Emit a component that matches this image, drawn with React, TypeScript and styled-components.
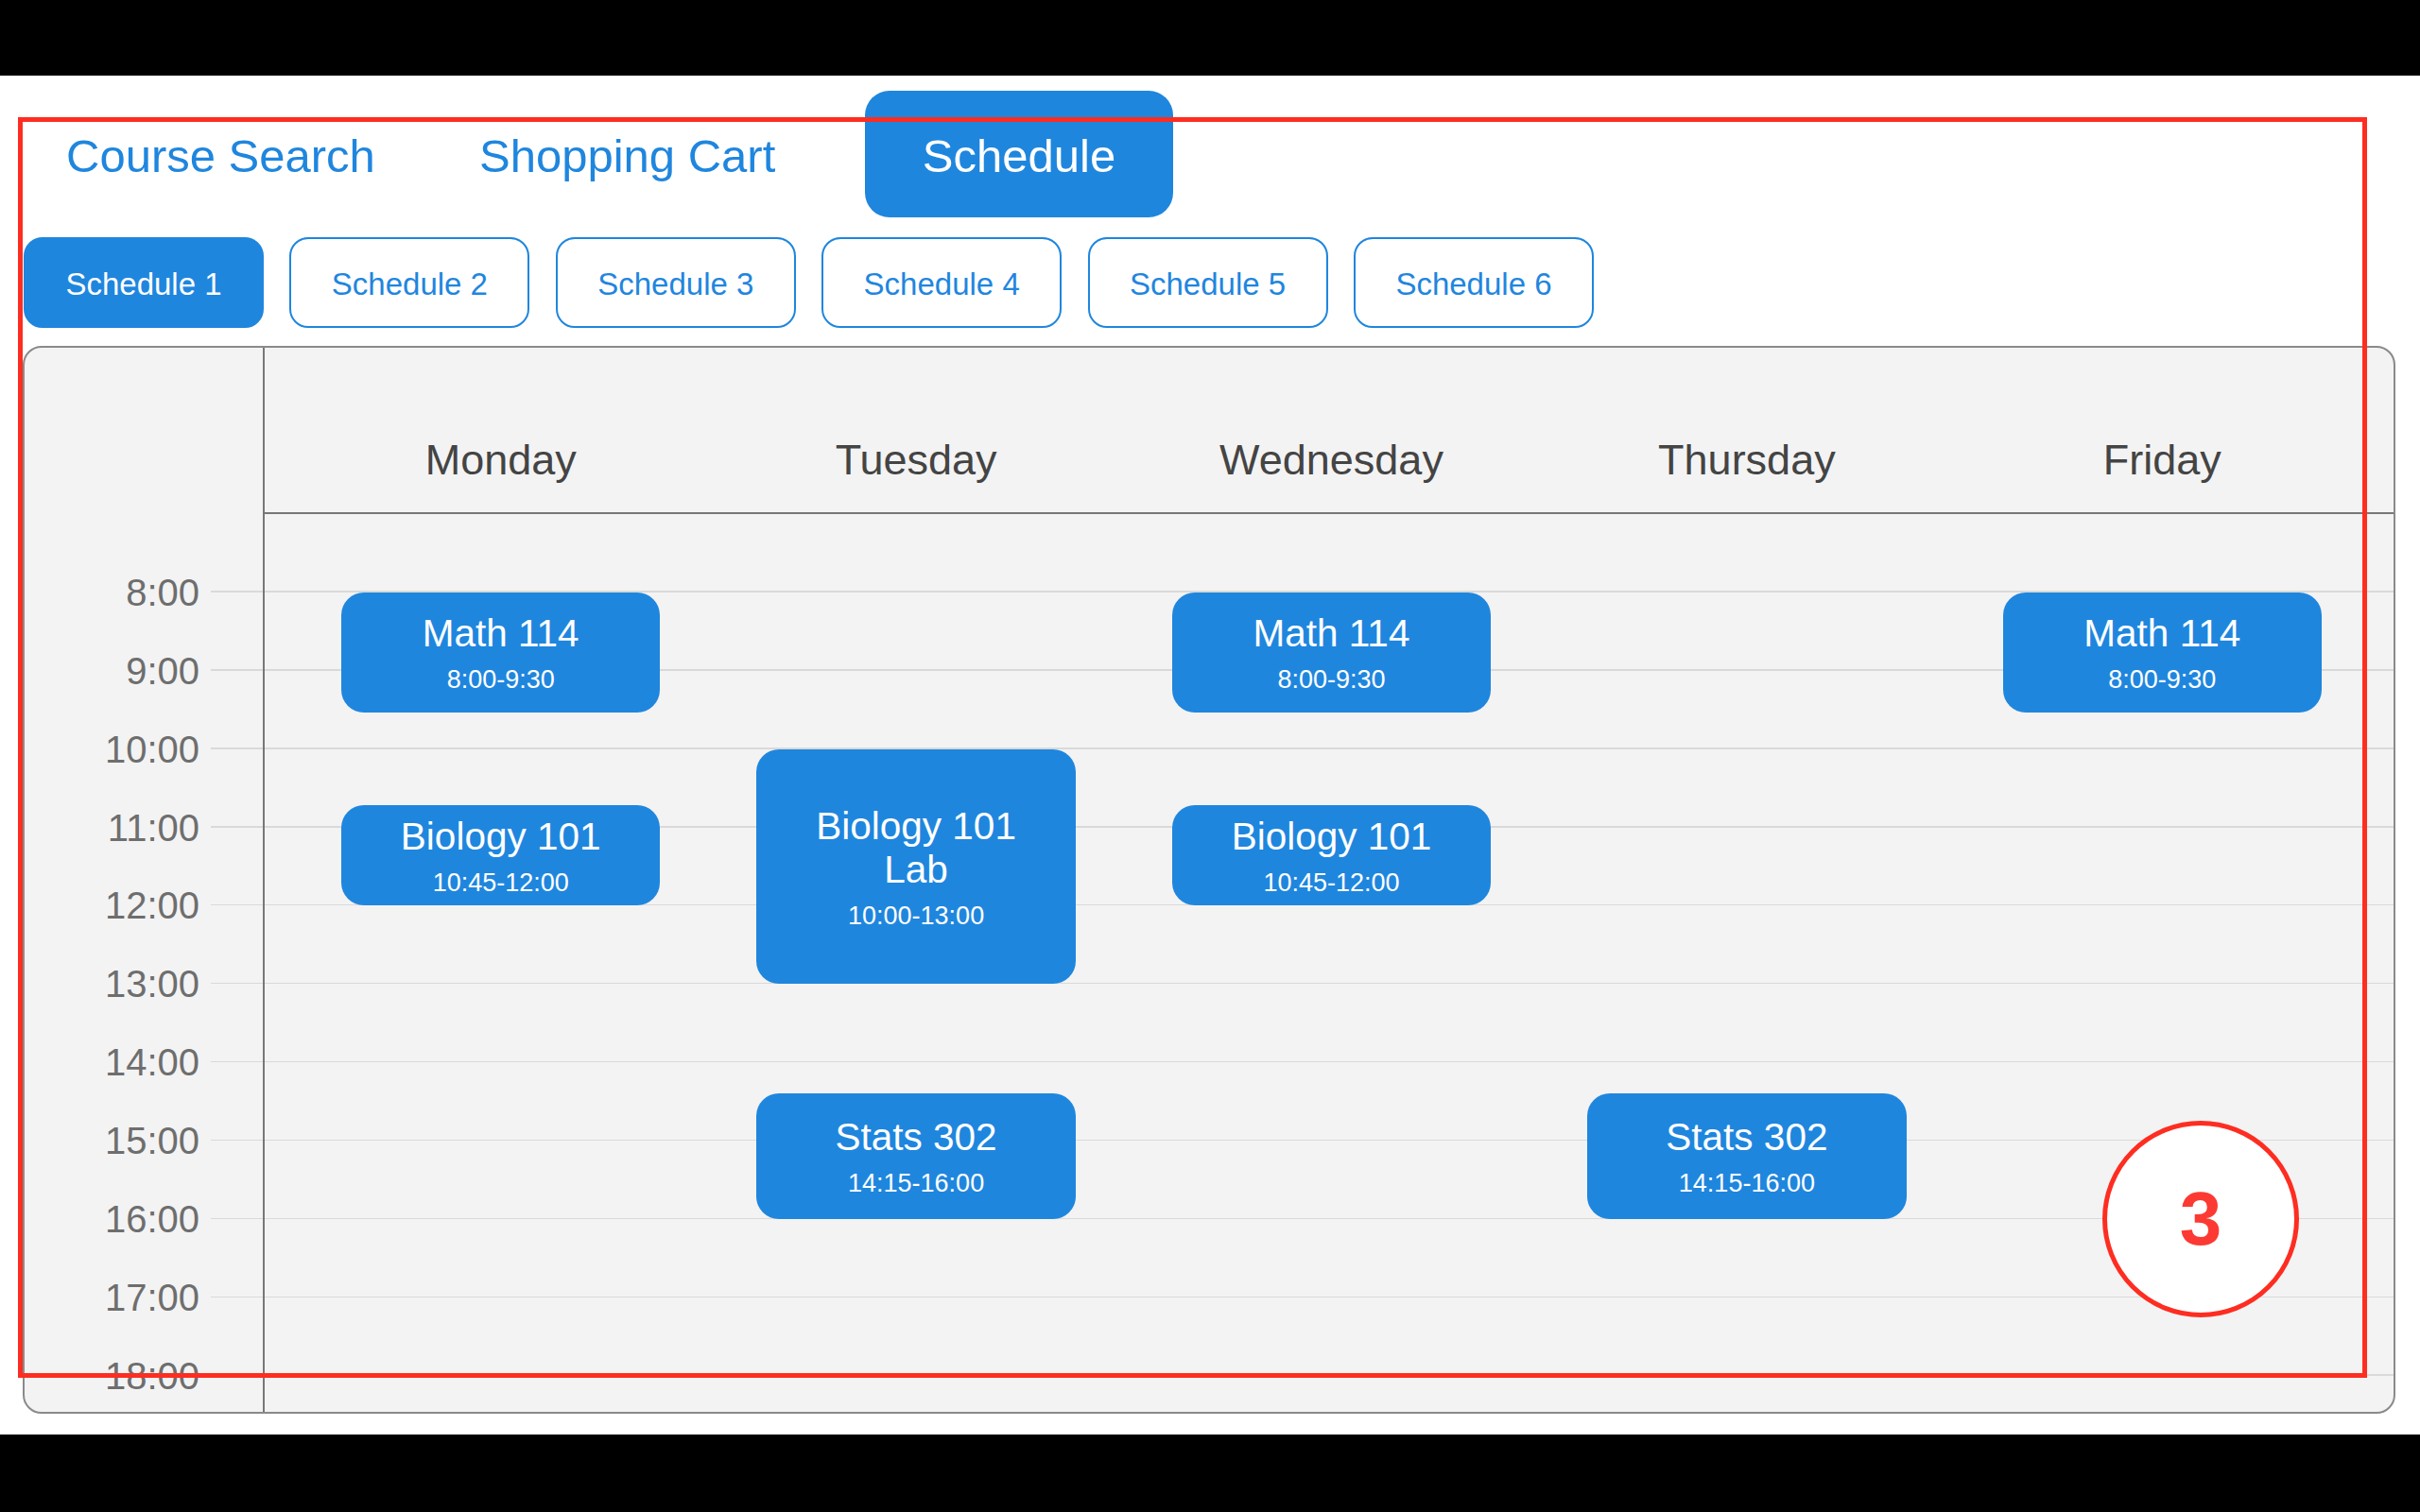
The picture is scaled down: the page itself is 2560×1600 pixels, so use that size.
import React from "react";
import styled, { createGlobalStyle } from "styled-components";

const HOUR = 82.9;
const FIRST_HOUR = 7;
const BLUE = "#1f86de";
const RED = "#fe2d21";

const GlobalStyle = createGlobalStyle`
  html, body {
    margin: 0;
    padding: 0;
    background: #000;
  }
  body {
    font-family: "Liberation Sans", Arial, Helvetica, sans-serif;
    -webkit-font-smoothing: antialiased;
  }
  * { box-sizing: border-box; }
`;

const Frame = styled.div`
  position: relative;
  width: 2560px;
  height: 1600px;
  background: #000;
  padding-top: 80px;
`;

const Screen = styled.main`
  height: 1438px;
  background: #fff;
  padding: 16px 26px 0 24px;
  display: flex;
  flex-direction: column;
`;

const Nav = styled.nav`
  display: grid;
  grid-template-columns: 437px 408px 326px;
  height: 134px;
  padding-left: 46px;
`;

const NavTab = styled.div<{ $active?: boolean }>`
  display: flex;
  align-items: center;
  justify-content: ${(p) => (p.$active ? "center" : "flex-start")};
  padding-top: 4px;
  border-radius: 26px;
  font-size: 49px;
  line-height: 1;
  white-space: nowrap;
  color: ${(p) => (p.$active ? "#fff" : BLUE)};
  background: ${(p) => (p.$active ? BLUE : "transparent")};
`;

const ScheduleTabs = styled.div`
  display: flex;
  gap: 27.4px;
  margin-top: 21px;
  padding-left: 1px;
`;

const ScheduleButton = styled.div<{ $active?: boolean }>`
  width: 254px;
  height: 96px;
  display: flex;
  align-items: center;
  justify-content: center;
  padding-top: 4px;
  border: 2px solid ${BLUE};
  border-radius: 20px;
  font-size: 33px;
  color: ${(p) => (p.$active ? "#fff" : BLUE)};
  background: ${(p) => (p.$active ? BLUE : "#fff")};
`;

const Panel = styled.section`
  margin-top: 19px;
  height: 1130px;
  border: 2px solid #8a8a8a;
  border-radius: 20px;
  background: #f3f3f3;
  display: flex;
  overflow: hidden;
`;

const TimeColumn = styled.div`
  width: 254px;
  border-right: 2px solid #777;
  display: flex;
  flex-direction: column;
`;

const TimeHeader = styled.div`
  height: 176px;
  flex: none;
`;

const TimeBody = styled.div`
  flex: 1;
  padding-top: ${HOUR / 2}px;
  padding-right: 67px;
  background: repeating-linear-gradient(
      to bottom,
      transparent 0,
      transparent ${HOUR - 1.5}px,
      #d9d9d9 ${HOUR - 1.5}px,
      #d9d9d9 ${HOUR}px
    )
    right top / 55px 100% no-repeat;
`;

const TimeSlot = styled.div`
  height: ${HOUR}px;
  display: flex;
  align-items: center;
  justify-content: flex-end;
  font-size: 40px;
  line-height: 40px;
  color: #6e6e6e;
`;

const DaysArea = styled.div`
  flex: 1;
  display: flex;
  flex-direction: column;
`;

const DayHeader = styled.div`
  height: 176px;
  flex: none;
  border-bottom: 2px solid #777;
  display: grid;
  grid-template-columns: repeat(5, 1fr);
  align-items: end;
  padding: 0 25px 29px 30px;
`;

const DayName = styled.div`
  text-align: center;
  font-size: 45px;
  line-height: 52px;
  color: #444;
`;

const DayBody = styled.div`
  flex: 1;
  display: grid;
  grid-template-columns: repeat(5, 1fr);
  padding: 0 25px 0 30px;
  background: repeating-linear-gradient(
    to bottom,
    transparent 0,
    transparent ${HOUR - 1.5}px,
    #d9d9d9 ${HOUR - 1.5}px,
    #d9d9d9 ${HOUR}px
  );
`;

const DayColumn = styled.div`
  position: relative;
`;

const EventBlock = styled.div`
  position: absolute;
  left: 51px;
  right: 51px;
  border-radius: 24px;
  background: ${BLUE};
  color: #fff;
  display: flex;
  flex-direction: column;
  align-items: center;
  justify-content: center;
  text-align: center;
  padding: 0 34px;
`;

const EventTitle = styled.div`
  font-size: 40.5px;
  line-height: 46px;
`;

const EventTime = styled.div`
  margin-top: 11px;
  font-size: 27px;
  line-height: 30px;
`;

const Annotation = styled.div`
  position: absolute;
  left: 19px;
  top: 124px;
  width: 2485px;
  height: 1334px;
  border: 5px solid ${RED};
  pointer-events: none;
`;

const Marker = styled.div`
  position: absolute;
  left: 2224px;
  top: 1186px;
  width: 208px;
  height: 208px;
  border: 5px solid ${RED};
  border-radius: 50%;
  background: #fff;
  display: flex;
  align-items: center;
  justify-content: center;
  font-size: 80px;
  font-weight: 700;
  color: #fc3a33;
  line-height: 1;
`;

type Course = { title: string; time: string; start: number; end: number };

const math: Course = { title: "Math 114", time: "8:00-9:30", start: 8, end: 9.53 };
const bio: Course = { title: "Biology 101", time: "10:45-12:00", start: 10.72, end: 12 };
const lab: Course = { title: "Biology 101 Lab", time: "10:00-13:00", start: 10, end: 13 };
const stats: Course = { title: "Stats 302", time: "14:15-16:00", start: 14.39, end: 16 };

const days: { name: string; courses: Course[] }[] = [
  { name: "Monday", courses: [math, bio] },
  { name: "Tuesday", courses: [lab, stats] },
  { name: "Wednesday", courses: [math, bio] },
  { name: "Thursday", courses: [stats] },
  { name: "Friday", courses: [math] },
];

const hours = Array.from({ length: 11 }, (_, i) => `${i + 8}:00`);
const schedules = [1, 2, 3, 4, 5, 6];

export default function App() {
  return (
    <>
      <GlobalStyle />
      <Frame>
        <Screen>
          <Nav>
            <NavTab>Course Search</NavTab>
            <NavTab>Shopping Cart</NavTab>
            <NavTab $active>Schedule</NavTab>
          </Nav>
          <ScheduleTabs>
            {schedules.map((n) => (
              <ScheduleButton key={n} $active={n === 1}>
                Schedule {n}
              </ScheduleButton>
            ))}
          </ScheduleTabs>
          <Panel>
            <TimeColumn>
              <TimeHeader />
              <TimeBody>
                {hours.map((h) => (
                  <TimeSlot key={h}>{h}</TimeSlot>
                ))}
              </TimeBody>
            </TimeColumn>
            <DaysArea>
              <DayHeader>
                {days.map((d) => (
                  <DayName key={d.name}>{d.name}</DayName>
                ))}
              </DayHeader>
              <DayBody>
                {days.map((d) => (
                  <DayColumn key={d.name}>
                    {d.courses.map((c) => (
                      <EventBlock
                        key={c.title}
                        style={{
                          top: (c.start - FIRST_HOUR) * HOUR,
                          height: (c.end - c.start) * HOUR,
                        }}
                      >
                        <EventTitle>{c.title}</EventTitle>
                        <EventTime>{c.time}</EventTime>
                      </EventBlock>
                    ))}
                  </DayColumn>
                ))}
              </DayBody>
            </DaysArea>
          </Panel>
        </Screen>
        <Annotation />
        <Marker>3</Marker>
      </Frame>
    </>
  );
}
